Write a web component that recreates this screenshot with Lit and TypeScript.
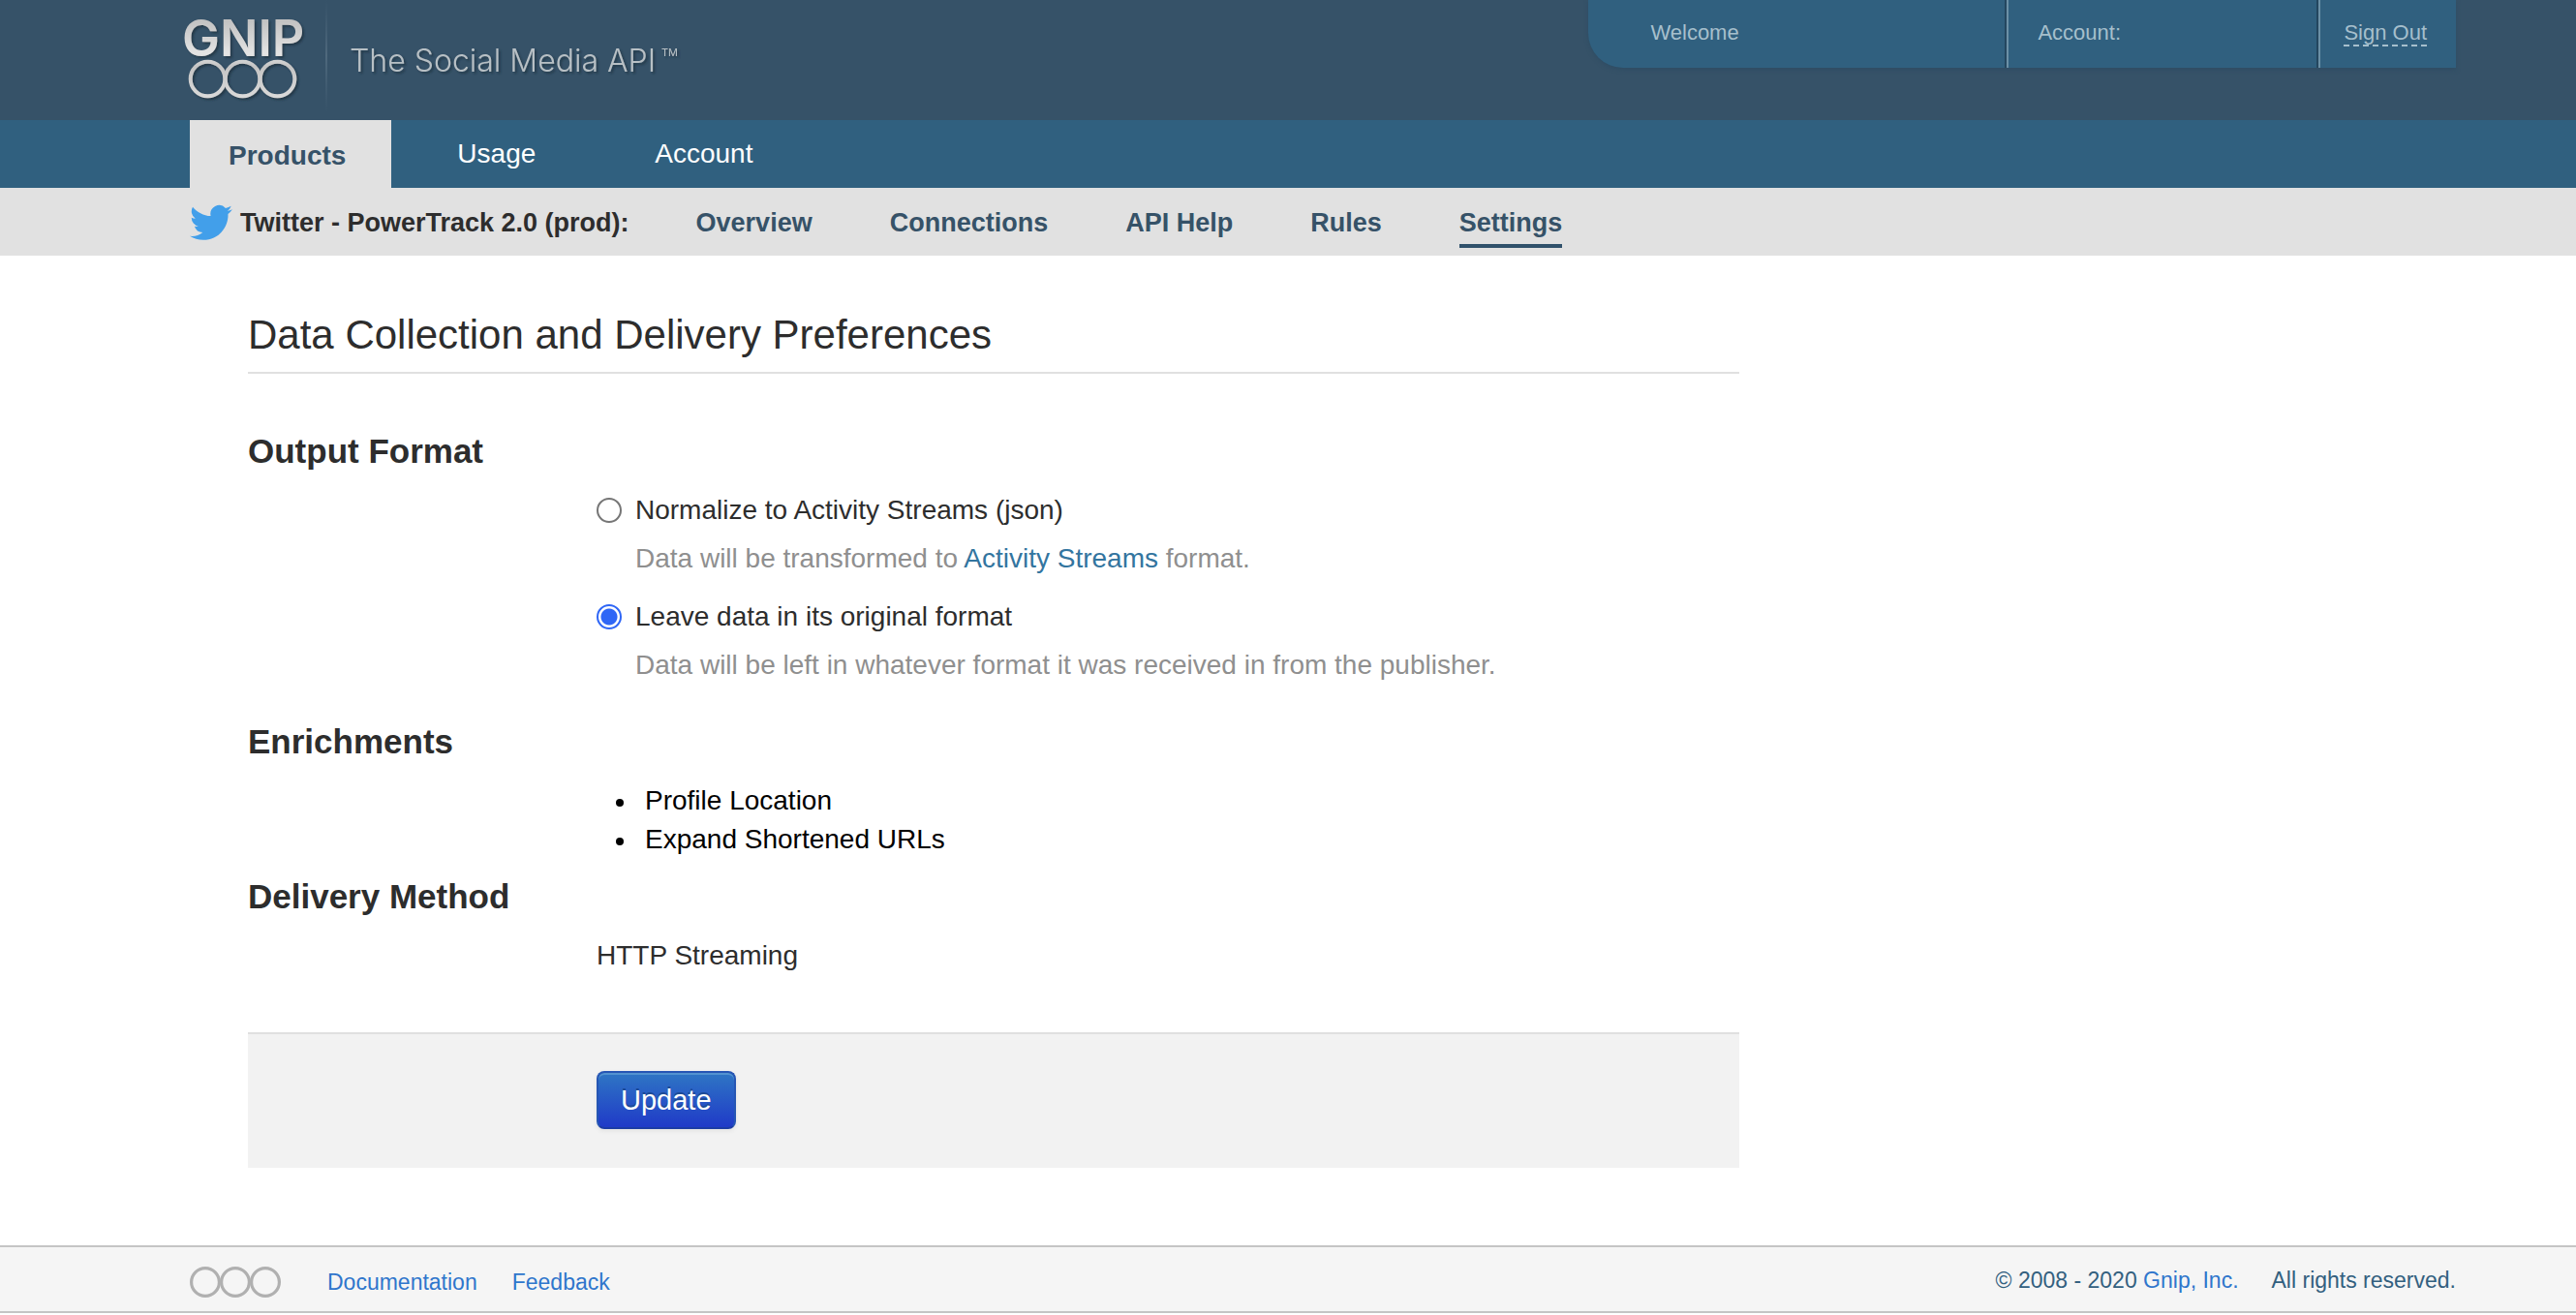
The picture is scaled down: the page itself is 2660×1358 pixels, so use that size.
import { LitElement, html, css, svg } from "lit";
import { customElement, state } from "lit/decorators.js";

@customElement("app-root")
export class AppRoot extends LitElement {
  @state() private format = "original";

  static styles = css`
    :host {
      display: block;
      font-family: "Liberation Sans", Arial, Helvetica, sans-serif;
      font-size: 28px;
      line-height: 40px;
      color: #2d2d2d;
      background: #fff;
    }
    * { box-sizing: border-box; }
    a { text-decoration: none; color: inherit; }
    h1, h2, p, ul { margin: 0; padding: 0; }
    .bar { padding: 0 124px 0 196px; display: flex; }
    .top { height: 124px; background: #365268; justify-content: space-between; align-items: flex-start; }
    .brand { display: block; margin-left: -10px; }
    .brand svg { display: block; }
    .wordmark { font: 600 52px/1 Inter, sans-serif; }
    .tagline { font: 300 32px/1 Inter, sans-serif; }
    .tm { font: 400 11px/1 Inter, sans-serif; }
    .session {
      display: flex;
      height: 70px;
      background: #30607f;
      border-bottom-left-radius: 36px;
      font-size: 22px;
      line-height: 28px;
      color: #a6bfcc;
      box-shadow: 0 2px 4px #2f4d64;
    }
    .cell { padding: 20px 30px 0 30px; }
    .cell + .cell { border-left: 2px solid #6b90a6; box-shadow: -2px 0 0 #24475f; }
    .who { width: 432px; padding-left: 64px; }
    .acct { width: 322px; }
    .out { padding-left: 24px; }
    .out a { display: block; line-height: 28px; height: 28px; border-bottom: 2px dashed #a6bfcc; }
    .tabs { height: 70px; background: #30607f; color: #fff; line-height: 70px; }
    .tab { padding: 0 55px 0 68px; }
    .tab.on { padding: 2px 47px 0 40px; background: #e1e1e1; color: #365268; font-weight: 700; }
    .sub { height: 70px; background: #e1e1e1; font-size: 27px; font-weight: 700; align-items: center; gap: 80px; color: #365268; }
    .source { display: flex; align-items: center; gap: 8px; color: #2d2d2d; margin-right: -11px; }
    .source svg { display: block; }
    .source span { padding-top: 2px; }
    .sub a { border-bottom: 4px solid transparent; margin-top: 8px; padding-bottom: 2px; line-height: 40px; }
    .sub a.on { border-color: #30516b; }
    main { padding: 56px 124px 80px 256px; }
    .panel { max-width: 1540px; }
    h1 { font-size: 42px; line-height: 50px; font-weight: 400; padding: 1px 0 13px; border-bottom: 2px solid #e0e0e0; }
    .group { padding-top: 19px; }
    .first { padding-top: 60px; }
    h2 { font-size: 35px; line-height: 40px; font-weight: 700; }
    .body { padding: 21px 0 0 360px; }
    .option { display: grid; grid-template-columns: 26px 1fr; column-gap: 14px; align-items: center; margin-bottom: 20px; }
    .option p { grid-column: 2; color: #8f8f8f; margin: 10px 0 0; }
    .option p a { color: #33759f; }
    input { appearance: none; width: 26px; height: 26px; margin: 0; border: 2px solid #767676; border-radius: 50%; background: #fff; }
    input:checked { border-color: #2f66f6; background: radial-gradient(circle, #2f66f6 8px, #fff 9px); }
    ul { padding-left: 20px; color: #000; list-style: none; }
    li { display: flex; align-items: center; gap: 22px; }
    li::before { content: ""; width: 8px; height: 8px; margin-top: 3px; border-radius: 50%; background: #000; }
    .actions { margin-top: 59px; padding: 38px 0 40px 360px; background: #f2f2f2; border-top: 2px solid #e0e0e0; }
    button {
      display: block;
      height: 60px;
      padding: 0 23px;
      border: 2px solid #2656b4;
      border-bottom-color: #1c3ca4;
      border-radius: 8px;
      background: linear-gradient(#2f78c4, #1f38c8) border-box;
      box-shadow: inset 0 2px 0 #5292d0, 0 2px 4px #e2e2e2;
      color: #fff;
      text-shadow: 0 -2px 0 #1c4a96;
      font: 400 29px/56px "Liberation Sans", Arial, sans-serif;
    }
    footer.bar { height: 70px; background: #f5f5f5; border: solid #c5c5c5; border-width: 2px 0; align-items: center; font-size: 23px; line-height: 28px; color: #33607f; }
    footer a { color: #2f76cc; }
    .rings { margin-top: 6px; }
    .links { display: flex; gap: 36px; margin-left: 48px; padding-top: 6px; }
    .legal { display: flex; gap: 34px; margin-left: auto; padding-top: 2px; }
  `;

  private rings(cx: number[], cy: number, r: number, w: number) {
    return cx.map((x) => svg`<circle cx=${x} cy=${cy} r=${r} fill="none" stroke-width=${w} />`);
  }

  render() {
    return html`
      <header class="bar top">
        <a class="brand" href="#" aria-label="Gnip home">
          <svg width="530" height="120" viewBox="0 0 530 120">
            <defs>
              <linearGradient id="metal" x1="0" y1="16" x2="0" y2="104" gradientUnits="userSpaceOnUse">
                <stop offset="0" stop-color="#bdbdbd" /><stop offset="0.45" stop-color="#e4e4e4" />
                <stop offset="0.6" stop-color="#c4c4c4" /><stop offset="1" stop-color="#dcdcdc" />
              </linearGradient>
              <linearGradient id="rule" x1="0" y1="0" x2="0" y2="1">
                <stop offset="0" stop-color="#4a6479" stop-opacity="0" /><stop offset="0.5" stop-color="#4f697d" />
                <stop offset="1" stop-color="#4a6479" stop-opacity="0" />
              </linearGradient>
              <filter id="drop" x="-10%" y="-10%" width="120%" height="125%">
                <feDropShadow dx="2" dy="2" stdDeviation="1" flood-color="#1c2f3e" flood-opacity="0.7" />
              </filter>
            </defs>
            <g filter="url(#drop)">
              <text class="wordmark" x="2" y="58" fill="url(#metal)">GNIP</text>
              <g stroke="url(#metal)">${this.rings([28.5, 64.5, 100.5], 81.5, 17.8, 4)}</g>
              <text class="tagline" x="175" y="74" fill="#b8c0c5">The Social Media API</text>
              <text class="tm" x="497" y="58" fill="#b8c0c5">TM</text>
            </g>
            <rect x="150" y="0" width="2" height="116" fill="url(#rule)" />
          </svg>
        </a>
        <div class="session">
          <div class="cell who">Welcome</div>
          <div class="cell acct">Account:</div>
          <div class="cell out"><a href="#">Sign Out</a></div>
        </div>
      </header>
      <nav class="bar tabs" aria-label="Main">
        <a class="tab on" href="#">Products</a>
        <a class="tab" href="#">Usage</a>
        <a class="tab" href="#">Account</a>
      </nav>
      <nav class="bar sub" aria-label="Product">
        <div class="source">
          <svg width="44" height="40" viewBox="0 0 24 21" fill="#429fea" aria-hidden="true">
            <path d="M23.95 4.57a10 10 0 0 1-2.82.78 4.96 4.96 0 0 0 2.16-2.73c-.95.56-2 .96-3.13 1.19a4.92 4.92 0 0 0-8.38 4.48C7.69 8.1 4.07 6.13 1.64 3.16a4.92 4.92 0 0 0 1.52 6.57 4.9 4.9 0 0 1-2.23-.61v.06a4.92 4.92 0 0 0 3.95 4.83 5 5 0 0 1-2.21.08 4.94 4.94 0 0 0 4.6 3.42A9.87 9.87 0 0 1 0 19.54a14 14 0 0 0 7.55 2.21c9.05 0 14-7.5 14-13.98l-.02-.64a9.9 9.9 0 0 0 2.42-2.56z" transform="translate(0 -1)" />
          </svg>
          <span>Twitter - PowerTrack 2.0 (prod):</span>
        </div>
        <a href="#">Overview</a>
        <a href="#">Connections</a>
        <a href="#">API Help</a>
        <a href="#">Rules</a>
        <a class="on" href="#" aria-current="page">Settings</a>
      </nav>
      <main>
        <form class="panel" @submit=${(e: Event) => e.preventDefault()}>
          <h1>Data Collection and Delivery Preferences</h1>
          <section class="group first">
            <h2>Output Format</h2>
            <div class="body">
              <div class="option">
                <input type="radio" id="json" name="format" .checked=${this.format === "json"} @change=${() => (this.format = "json")} />
                <label for="json">Normalize to Activity Streams (json)</label>
                <p>Data will be transformed to <a href="#">Activity Streams</a> format.</p>
              </div>
              <div class="option">
                <input type="radio" id="original" name="format" .checked=${this.format === "original"} @change=${() => (this.format = "original")} />
                <label for="original">Leave data in its original format</label>
                <p>Data will be left in whatever format it was received in from the publisher.</p>
              </div>
            </div>
          </section>
          <section class="group">
            <h2>Enrichments</h2>
            <div class="body">
              <ul>
                <li>Profile Location</li>
                <li>Expand Shortened URLs</li>
              </ul>
            </div>
          </section>
          <section class="group">
            <h2>Delivery Method</h2>
            <div class="body"><p>HTTP Streaming</p></div>
          </section>
          <div class="actions"><button type="submit">Update</button></div>
        </form>
      </main>
      <footer class="bar">
        <svg class="rings" width="94" height="32" viewBox="0 0 94 32" stroke="#b0b0b0" aria-hidden="true">${this.rings([16, 47, 78], 16, 14.4, 3.2)}</svg>
        <div class="links"><a href="#">Documentation</a><a href="#">Feedback</a></div>
        <div class="legal"><span>© 2008 - 2020 <a href="#">Gnip, Inc.</a></span><span>All rights reserved.</span></div>
      </footer>
    `;
  }
}
